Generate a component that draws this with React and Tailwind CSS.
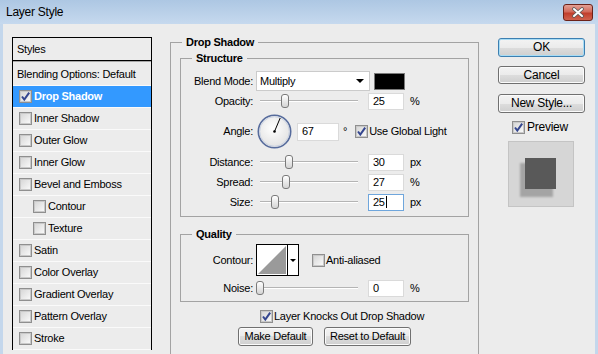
import React from 'react';

const styleRows = [
  { label: 'Blending Options: Default', plain: true },
  { label: 'Drop Shadow', checked: true, active: true },
  { label: 'Inner Shadow' },
  { label: 'Outer Glow' },
  { label: 'Inner Glow' },
  { label: 'Bevel and Emboss' },
  { label: 'Contour', indent: true },
  { label: 'Texture', indent: true },
  { label: 'Satin' },
  { label: 'Color Overlay' },
  { label: 'Gradient Overlay' },
  { label: 'Pattern Overlay' },
  { label: 'Stroke' },
];

function Check({ checked, className = '' }) {
  return (
    <span className={`flex h-[13px] w-[13px] shrink-0 items-center justify-center border border-[#8f8f8f] bg-[#f4f4f4] ${className}`}>
      <span className="relative h-[11px] w-[11px] border border-[#c9c9c9] bg-gradient-to-br from-[#d8d8d8] to-[#f8f8f8]">
        {checked && (
          <svg className="absolute left-[-1px] top-[-1px]" width="11" height="11" viewBox="0 0 11 11">
            <path d="M2 5.5 L4.3 8.6 L9.2 1.6" fill="none" stroke="#34468f" strokeWidth="2" />
          </svg>
        )}
      </span>
    </span>
  );
}

function Btn({ children, focus, className = '' }) {
  return (
    <div
      className={`flex shrink-0 items-center justify-center rounded-[3px] border bg-[linear-gradient(#f3f3f3,#ebebeb_50%,#dddddd_50%,#cfcfcf)] ${
        focus ? 'border-[#3c7fb1] shadow-[inset_0_0_0_1px_#a7dcf5]' : 'border-[#707070] shadow-[inset_0_0_0_1px_#fbfbfb]'
      } ${className}`}
    >
      {children}
    </div>
  );
}

function Slider({ thumb }) {
  return (
    <div className="relative ml-[3px] flex h-[20px] w-[106px] shrink-0 items-center pl-[4px]">
      <div className="h-[2px] w-[98px] border-t border-b border-t-[#b4b4b4] border-b-white" />
      <div className={`absolute top-[3px] h-[14px] w-[8px] rounded-[3px] border border-[#7a7a7a] bg-gradient-to-b from-white to-[#d4d4d4] ${thumb}`} />
    </div>
  );
}

function Field({ value, focus, className = '' }) {
  return (
    <div className={`flex h-[17px] shrink-0 items-center border bg-white pl-[4px] ${focus ? 'border-[#6fa6dc]' : 'border-[#dadada]'} ${className}`}>
      {value}
      {focus && <span className="ml-[1px] h-[12px] w-px bg-black" />}
    </div>
  );
}

function Row({ label, h = 'h-[20px]', className = '', children }) {
  return (
    <div className={`flex items-center ${h} ${className}`}>
      <span className="w-[72px] shrink-0 text-right">{label}</span>
      {children}
    </div>
  );
}

function SliderRow({ label, thumb, value, unit, focus }) {
  return (
    <Row label={label}>
      <Slider thumb={thumb} />
      <Field value={value} focus={focus} className="ml-[6px] w-[36px]" />
      <span className="ml-[6px]">{unit}</span>
    </Row>
  );
}

function TitleBar() {
  return (
    <div className="flex h-[24px] shrink-0 items-center justify-between bg-gradient-to-b from-[#adc7e3] to-[#c6d9ee] pl-[6px] pr-[5px]">
      <span className="text-[12px]">Layer Style</span>
      <div className="flex h-[17px] w-[30px] items-center justify-center rounded-[3px] border border-[#6b2219] bg-[linear-gradient(#e3a094,#d26a5b_45%,#c13e2c_55%,#d0624e)]">
        <svg width="14" height="11" viewBox="0 0 14 11">
          <path d="M3 2 L11 9 M11 2 L3 9" stroke="#5b5b5b" strokeWidth="3.6" strokeLinecap="round" />
          <path d="M3 2 L11 9 M11 2 L3 9" stroke="#ffffff" strokeWidth="2" strokeLinecap="round" />
        </svg>
      </div>
    </div>
  );
}

function StylesPanel() {
  return (
    <div className="ml-[9px] mt-[13px] flex w-[140px] shrink-0 flex-col border-x border-t border-black">
      <div className="flex h-[23px] items-center border-b border-black pl-[4px]">Styles</div>
      <div className="h-[3px] border-t border-[#a8a8a8]" />
      {styleRows.map((r) => (
        <div
          key={r.label}
          className={`flex h-[22px] shrink-0 items-center border-b border-[#fafafa] ${r.active ? 'bg-[#3399ff] font-bold text-white' : ''} ${r.plain ? 'pl-[4px]' : ''}`}
        >
          {!r.plain && <Check checked={r.checked} className={r.indent ? 'ml-[20px]' : 'ml-[6px]'} />}
          <span className={r.plain ? '' : 'ml-[2px]'}>{r.label}</span>
        </div>
      ))}
    </div>
  );
}

function Main() {
  return (
    <fieldset className="ml-[18px] mt-[12px] h-[330px] w-[309px] shrink-0 border border-[#a3a3a3]">
      <legend className="ml-[11px] px-[4px] font-bold">Drop Shadow</legend>

      <fieldset className="ml-[9px] mt-[3px] w-[289px] border border-[#a3a3a3] pb-[4px]">
        <legend className="ml-[11px] px-[4px] font-bold">Structure</legend>
        <Row label="Blend Mode:" className="mt-[6px]">
          <div className="ml-[3px] flex h-[20px] w-[114px] items-center justify-between border border-[#cbcbcb] bg-white pl-[3px] pr-[5px]">
            <span>Multiply</span>
            <svg width="8" height="4" viewBox="0 0 8 4">
              <path d="M0 0 H8 L4 4 Z" fill="#000" />
            </svg>
          </div>
          <div className="ml-[4px] h-[17px] w-[31px] border border-[#7a7a7a] bg-black" />
        </Row>
        <SliderRow label="Opacity:" thumb="left-[25px]" value="25" unit="%" />
        <Row label="Angle:" h="h-[41px]">
          <svg className="ml-[4px] shrink-0" width="35" height="35" viewBox="0 0 35 35">
            <defs>
              <radialGradient id="dial" cx="45%" cy="40%" r="60%">
                <stop offset="0" stopColor="#ffffff" />
                <stop offset="1" stopColor="#e2e2e2" />
              </radialGradient>
            </defs>
            <circle cx="17.5" cy="17.5" r="16.2" fill="url(#dial)" stroke="#566b9c" strokeWidth="1.6" />
            <circle cx="17.5" cy="17.5" r="14.8" fill="none" stroke="#c3cde0" strokeWidth="0.8" />
            <line x1="17.5" y1="17.5" x2="23.2" y2="4" stroke="#000" strokeWidth="1" />
            <circle cx="17.5" cy="17.5" r="1.3" fill="#000" />
          </svg>
          <Field value="67" className="ml-[5px] h-[18px] w-[42px]" />
          <span className="ml-[4px]">°</span>
          <Check checked className="ml-[8px]" />
          <span className="ml-[1px]">Use Global Light</span>
        </Row>
        <SliderRow label="Distance:" thumb="left-[29px]" value="30" unit="px" />
        <SliderRow label="Spread:" thumb="left-[26px]" value="27" unit="%" />
        <SliderRow label="Size:" thumb="left-[15px]" value="25" unit="px" focus />
      </fieldset>

      <fieldset className="ml-[9px] mt-[11px] w-[289px] border border-[#a3a3a3] pb-[3px]">
        <legend className="ml-[11px] px-[4px] font-bold">Quality</legend>
        <Row label="Contour:" h="h-[32px]" className="mt-[3px]">
          <div className="ml-[3px] flex h-[32px] w-[43px] shrink-0 border border-black bg-white">
            <svg width="30" height="30" viewBox="0 0 30 30">
              <path d="M1 29 L29 1 L29 29 Z" fill="#9a9a9a" />
            </svg>
            <div className="flex flex-1 items-center justify-center border-l border-black">
              <svg width="6" height="3" viewBox="0 0 6 3">
                <path d="M0 0 H6 L3 3 Z" fill="#000" />
              </svg>
            </div>
          </div>
          <Check className="ml-[13px]" />
          <span className="ml-[1px]">Anti-aliased</span>
        </Row>
        <div className="mt-[2px]">
          <SliderRow label="Noise:" thumb="left-[0px]" value="0" unit="%" />
        </div>
      </fieldset>

      <div className="mt-[6px] flex h-[16px] items-center pl-[89px]">
        <Check checked />
        <span className="ml-[1px]">Layer Knocks Out Drop Shadow</span>
      </div>
      <div className="mt-[3px] flex gap-[11px] pl-[67px]">
        <Btn className="h-[19px] w-[75px]">Make Default</Btn>
        <Btn className="h-[19px] w-[87px]">Reset to Default</Btn>
      </div>
    </fieldset>
  );
}

function Side() {
  return (
    <div className="ml-[19px] mt-[14px] flex w-[87px] shrink-0 flex-col text-[12px]">
      <Btn focus className="h-[19px]">OK</Btn>
      <Btn className="mt-[9px] h-[18px]">Cancel</Btn>
      <Btn className="mt-[10px] h-[19px]">New Style...</Btn>
      <div className="mt-[8px] flex h-[13px] items-center pl-[14px]">
        <Check checked />
        <span className="ml-[2px]">Preview</span>
      </div>
      <div className="ml-[10px] mt-[7px] h-[66px] w-[66px] border border-[#c4c4c4] bg-[#d6d6d6]">
        <svg width="64" height="64" viewBox="0 0 64 64">
          <defs>
            <filter id="soft" x="-20%" y="-20%" width="140%" height="140%">
              <feGaussianBlur stdDeviation="1" />
            </filter>
          </defs>
          <rect x="11" y="21" width="33" height="34" fill="#a4a4a4" filter="url(#soft)" />
          <rect x="16" y="16" width="31" height="31" fill="#595959" />
        </svg>
      </div>
    </div>
  );
}

export default function App() {
  return (
    <div className="flex h-[354px] w-[598px] flex-col overflow-hidden bg-[#ececec] font-['Liberation_Sans',Arial,sans-serif] text-[11px] leading-[13px] tracking-[-0.25px] text-black">
      <TitleBar />
      <div className="flex min-h-0 flex-1 items-start border-x-[3px] border-[#c4d7ec]">
        <StylesPanel />
        <Main />
        <Side />
      </div>
    </div>
  );
}
